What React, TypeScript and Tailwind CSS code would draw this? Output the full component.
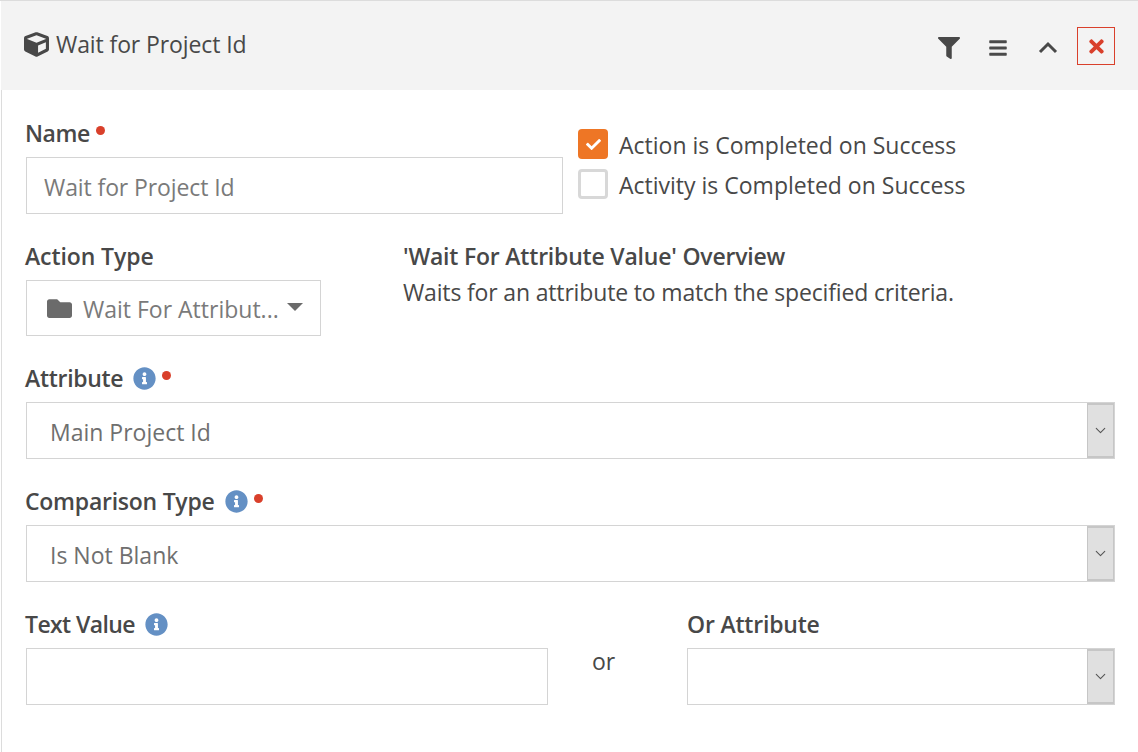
import { ChevronDown } from "lucide-react";
import { FaBars, FaCheck, FaCube, FaFilter, FaFolder, FaInfoCircle, FaTimes } from "react-icons/fa";

const font = "font-['Open_Sans',sans-serif]";

function Dot() {
  return <span className="inline-block w-[9px] h-[9px] rounded-full bg-[#d9402b]" />;
}

function Label({ text, info, req, track, flush }: { text: string; info?: boolean; req?: boolean; track?: string; flush?: boolean }) {
  return (
    <div className={`flex items-center gap-[10px] h-[28px] mb-[10px] ${flush ? "" : "-ml-[1px]"}`}>
      <span className={`text-[23px] font-semibold text-[#484848] leading-[28px] ${track || "tracking-[-0.2px]"}`}>{text}</span>
      {info && <FaInfoCircle className="text-[#6490c4] w-[23px] h-[23px]" />}
      {req && <span className="-ml-[4px] -mt-[5px] flex"><Dot /></span>}
    </div>
  );
}

function SelectBox({ text }: { text?: string }) {
  return (
    <div className="flex items-center h-[57px] border border-[#d4d4d4] bg-white pl-[23px]">
      <span className="flex-1 text-[23px] text-[#6f6f6f] pt-[4px]">{text}</span>
      <div className="w-[27px] h-[55px] bg-[#e0e0e0] border-x border-t-2 border-b-2 border-[#c6c6c6] flex items-center justify-center">
        <ChevronDown className="w-[17px] h-[17px] text-[#555]" strokeWidth={1.5} />
      </div>
    </div>
  );
}

function CheckRow({ on, text }: { on?: boolean; text: string }) {
  return (
    <div className="flex items-center gap-[11px] h-[30px]">
      {on ? (
        <div className="w-[30px] h-[30px] rounded-[4px] bg-[#ee7625] flex items-center justify-center">
          <FaCheck className="w-[15px] h-[15px] text-white" />
        </div>
      ) : (
        <div className="w-[30px] h-[30px] rounded-[4px] border-[3px] border-[#d8d8d8] bg-white" />
      )}
      <span className="text-[23px] text-[#484848] mt-[2px]">{text}</span>
    </div>
  );
}

export default function App() {
  return (
    <div className={`${font} w-[1138px] h-[752px] bg-white overflow-hidden border-t border-[#dcdcdc] pl-[1px]`}>
      <div className="h-[89px] bg-[#f3f3f3] flex items-center pl-[23px] pr-[23px]">
        <FaCube className="w-[25px] h-[25px] text-[#484848] -mt-[2px]" />
        <span className="ml-[7px] -mt-[2px] text-[23px] text-[#484848] tracking-[-0.1px]">Wait for Project Id</span>
        <div className="ml-auto flex items-center">
          <FaFilter className="w-[22px] h-[22px] text-[#484848] mt-[5px]" />
          <FaBars className="ml-[28px] w-[20px] h-[20px] text-[#4a4a4a] mt-[5px]" />
          <svg className="ml-[30px] mt-[3px]" width="20" height="13" viewBox="0 0 20 13" fill="none" stroke="#484848" strokeWidth="3">
            <path d="M2 11L10 3L18 11" />
          </svg>
          <div className="ml-[19px] mt-[1px] w-[38px] h-[38px] border border-[#d9402b] flex items-center justify-center">
            <FaTimes className="w-[21px] h-[21px] text-[#d9402b]" />
          </div>
        </div>
      </div>
      <div className="border-l border-[#dcdcdc] h-full pl-[24px] pr-[23px] pt-[29px]">
        <div className="flex">
          <div className="w-[537px]">
            <Label text="Name" req track="tracking-[-0.4px]" />
            <div className="h-[57px] border border-[#d4d4d4] flex items-center pl-[17px] pt-[4px] text-[23px] text-[#7a7a7a] tracking-[-0.1px]">Wait for Project Id</div>
          </div>
          <div className="ml-[15px] pt-[10px] flex flex-col gap-[10px]">
            <CheckRow on text="Action is Completed on Success" />
            <CheckRow text="Activity is Completed on Success" />
          </div>
        </div>
        <div className="flex mt-[28px]">
          <div className="w-[377px]">
            <Label text="Action Type" track="tracking-[-0.1px]" />
            <div className="w-[295px] h-[56px] border border-[#d4d4d4] flex items-center pl-[20px]">
              <FaFolder className="w-[25px] h-[25px] text-[#6b6b6b]" />
              <span className="ml-[11px] pt-[2px] text-[23px] text-[#7a7a7a]">Wait For Attribut...</span>
              <span className="ml-[8px] -mt-[2px] w-0 h-0 border-x-[8px] border-x-transparent border-t-[8px] border-t-[#6b6b6b]" />
            </div>
          </div>
          <div>
            <div className="text-[23px] font-semibold text-[#484848] leading-[28px] tracking-[-0.2px]">'Wait For Attribute Value' Overview</div>
            <div className="text-[23px] text-[#484848] mt-[8px] leading-[28px] tracking-[-0.16px]">Waits for an attribute to match the specified criteria.</div>
          </div>
        </div>
        <div className="mt-[28px]">
          <Label text="Attribute" info req track="tracking-[-0.3px]" />
          <SelectBox text="Main Project Id" />
        </div>
        <div className="mt-[28px]">
          <Label text="Comparison Type" info req track="tracking-[-0.25px]" />
          <SelectBox text="Is Not Blank" />
        </div>
        <div className="mt-[28px] flex">
          <div className="w-[522px]">
            <Label text="Text Value" info track="tracking-[-0.6px]" />
            <div className="h-[57px] border border-[#d4d4d4]" />
          </div>
          <div className="w-[111px] mr-[28px] text-center pt-[34px] text-[23px] text-[#484848]">or</div>
          <div className="w-[428px]">
            <Label text="Or Attribute" flush />
            <SelectBox />
          </div>
        </div>
      </div>
    </div>
  );
}
